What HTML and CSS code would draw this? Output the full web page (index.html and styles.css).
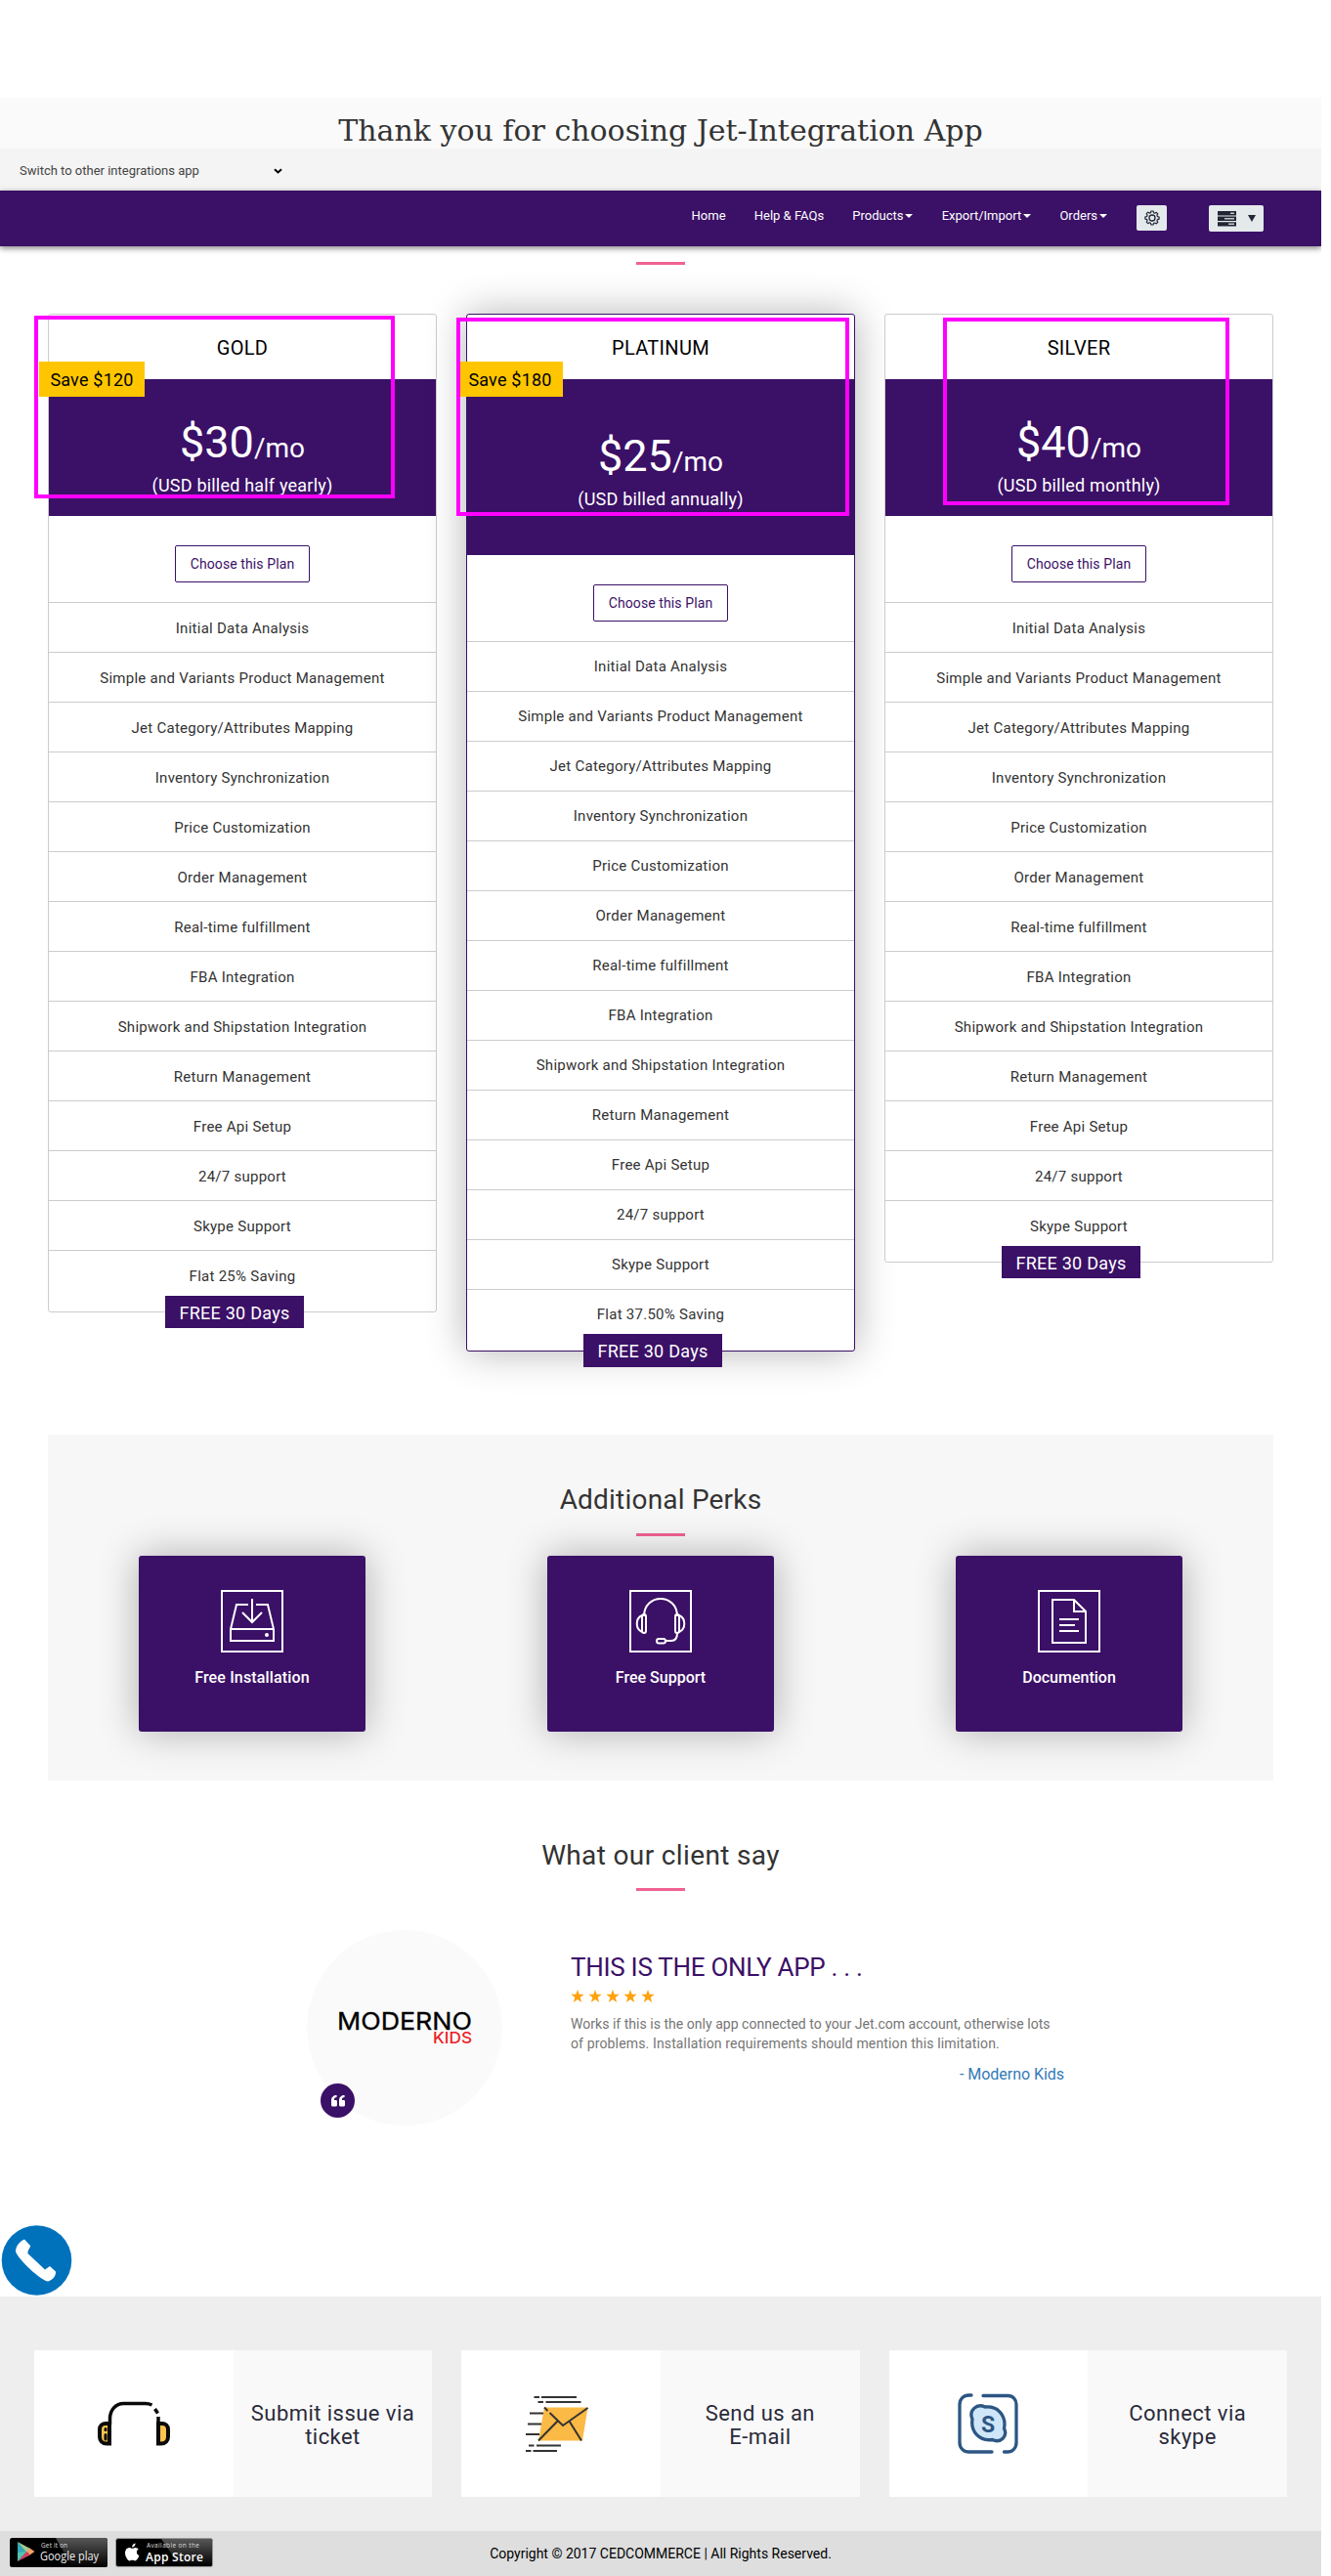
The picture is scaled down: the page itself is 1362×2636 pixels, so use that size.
FILE: index.html
```
<!DOCTYPE html>
<html lang="en">
<head>
<meta charset="utf-8">
<title>Jet-Integration App - Pricing</title>
<link rel="stylesheet" href="styles.css">
</head>
<body>
<header>
  <h1 class="thanks">Thank you for choosing Jet-Integration App</h1>
  <div class="switcher">
    <span class="switcher-label">Switch to other integrations app</span>
    <svg width="9" height="6" viewBox="0 0 9 6"><path d="M1 1.2 4.5 4.4 8 1.2" fill="none" stroke="#000" stroke-width="2"/></svg>
  </div>
  <nav class="nav">
    <a>Home</a>
    <a>Help &amp; FAQs</a>
    <a>Products<i class="caret"></i></a>
    <a>Export/Import<i class="caret"></i></a>
    <a>Orders<i class="caret"></i></a>
    <span class="nav-btn gear">
      <svg width="16" height="16" viewBox="0 0 16 16" fill="none" stroke="#222533"><path stroke-width="1.2" stroke-linejoin="round" d="M6.900 1h2.200l.4 1.700 1.300.5 1.500-.9 1.500 1.500-.9 1.500.5 1.300 1.700.4v2.200l-1.700.4-.5 1.300.9 1.500-1.500 1.500-1.500-.9-1.300.5L9.100 15H6.900l-.4-1.700-1.300-.5-1.500.9-1.500-1.500.9-1.500-.5-1.300L.9 9.100V6.900l1.700-.4.5-1.300-.9-1.500 1.500-1.500 1.500.9 1.300-.5z"/><circle cx="8" cy="8" r="3" stroke-width="1.300"/></svg>
    </span>
    <span class="nav-btn server">
      <svg width="19" height="16" viewBox="0 0 19 16"><path fill="#222533" d="M0 0h19v4.400H0zM0 5.600h19V10H0zM0 11.200h19v4.400H0z"/><path fill="#c4c8cc" d="M13 1.500h4v1.500h-4zM7 7h10v1.500H7zM11 12.600h6v1.500h-6z"/></svg>
      <svg width="8" height="7" viewBox="0 0 8 7"><path fill="#222533" d="M0 0h8L4 7z"/></svg>
    </span>
  </nav>
</header>

<main>
  <div class="rule rule-top"></div>
  <section class="plans">
    <article class="plan">
      <h2>GOLD</h2>
      <span class="save">Save $120</span>
      <div class="price"><p class="amount">$30<span>/mo</span></p><p class="billing">(USD billed half yearly)</p></div>
      <div class="choose"><a class="btn">Choose this Plan</a></div>
      <ul>
        <li>Initial Data Analysis</li><li>Simple and Variants Product Management</li><li>Jet Category/Attributes Mapping</li><li>Inventory Synchronization</li><li>Price Customization</li><li>Order Management</li><li>Real-time fulfillment</li><li>FBA Integration</li><li>Shipwork and Shipstation Integration</li><li>Return Management</li><li>Free Api Setup</li><li>24/7 support</li><li>Skype Support</li><li>Flat 25% Saving</li>
      </ul>
      <span class="free">FREE 30 Days</span>
    </article>
    <article class="plan featured">
      <h2>PLATINUM</h2>
      <span class="save">Save $180</span>
      <div class="price"><p class="amount">$25<span>/mo</span></p><p class="billing">(USD billed annually)</p></div>
      <div class="choose"><a class="btn">Choose this Plan</a></div>
      <ul>
        <li>Initial Data Analysis</li><li>Simple and Variants Product Management</li><li>Jet Category/Attributes Mapping</li><li>Inventory Synchronization</li><li>Price Customization</li><li>Order Management</li><li>Real-time fulfillment</li><li>FBA Integration</li><li>Shipwork and Shipstation Integration</li><li>Return Management</li><li>Free Api Setup</li><li>24/7 support</li><li>Skype Support</li><li>Flat 37.50% Saving</li>
      </ul>
      <span class="free">FREE 30 Days</span>
    </article>
    <article class="plan">
      <h2>SILVER</h2>
      <div class="price"><p class="amount">$40<span>/mo</span></p><p class="billing">(USD billed monthly)</p></div>
      <div class="choose"><a class="btn">Choose this Plan</a></div>
      <ul>
        <li>Initial Data Analysis</li><li>Simple and Variants Product Management</li><li>Jet Category/Attributes Mapping</li><li>Inventory Synchronization</li><li>Price Customization</li><li>Order Management</li><li>Real-time fulfillment</li><li>FBA Integration</li><li>Shipwork and Shipstation Integration</li><li>Return Management</li><li>Free Api Setup</li><li>24/7 support</li><li>Skype Support</li>
      </ul>
      <span class="free">FREE 30 Days</span>
    </article>
    <i class="mark mark-gold"></i>
    <i class="mark mark-platinum"></i>
    <i class="mark mark-silver"></i>
  </section>

  <section class="perks">
    <h2 class="section-title">Additional Perks</h2>
    <div class="rule"></div>
    <div class="perk-grid">
      <div class="perk">
        <svg width="64" height="64" viewBox="0 0 64 64" fill="none" stroke="#fff" stroke-width="2"><path d="M1 1h62v62H1z"/><path d="M28 15H16L10 40V52h44V40L48 15H36M10 40h44"/><path d="M32 9v24M22 23l10 10 10-10"/><circle cx="47" cy="46" r="2" fill="#fff" stroke="none"/></svg>
        <span>Free Installation</span>
      </div>
      <div class="perk">
        <svg width="64" height="64" viewBox="0 0 64 64" fill="none" stroke="#fff" stroke-width="2"><path d="M1 1h62v62H1z"/><path d="M15 27C15 3 49 3 49 27"/><rect x="13" y="25" width="4" height="19" rx="2"/><rect x="47" y="25" width="4" height="19" rx="2"/><path d="M13 26c-7 3-7 14 0 17M51 26c7 3 7 14 0 17M49 44c0 6-2 8-6 8h-6"/><rect x="28" y="50" width="9" height="4.500" rx="2.200"/></svg>
        <span class="tight">Free Support</span>
      </div>
      <div class="perk">
        <svg width="64" height="64" viewBox="0 0 64 64" fill="none" stroke="#fff" stroke-width="2"><path d="M1 1h62v62H1z"/><path d="M15 10h22l12 12v32H15zM37 10v12h12M22 30h20M22 36h16M22 42h20"/></svg>
        <span class="tight">Documention</span>
      </div>
    </div>
  </section>

  <section class="clients">
    <h2 class="section-title wide">What our client say</h2>
    <div class="rule"></div>
    <div class="testimonial">
      <div class="avatar">
        <svg class="logo" width="140" height="50" viewBox="0 -8 140 50"><text class="logo-main" x="1" y="20" textLength="138" lengthAdjust="spacingAndGlyphs">MODERNO</text><text class="logo-sub" x="99" y="34" textLength="40" lengthAdjust="spacingAndGlyphs">KIDS</text></svg>
        <span class="quote"><svg width="14" height="12" viewBox="0 0 14 12" fill="#fff"><path d="M5.600 0v2C4 2 2.900 3 2.900 4.600V5h1.800C5.500 5 6 5.600 6 6.400v3.700c0 .9-.5 1.500-1.400 1.500H1.500C.6 11.600 0 11 0 10.100V5.200C0 2 2.300 0 5.600 0z"/><path d="M13.600 0v2c-1.600 0-2.700 1-2.700 2.600V5h1.800c.8 0 1.300.6 1.300 1.400v3.700c0 .9-.5 1.500-1.400 1.500H9.500C8.600 11.600 8 11 8 10.100V5.200C8 2 10.300 0 13.600 0z"/></svg></span>
      </div>
      <div class="review">
        <h3>THIS IS THE ONLY APP . . .</h3>
        <svg class="stars" width="88" height="13" viewBox="0 0 88 13" fill="#ffa20d"><path d="M7 0l1.700 4.800h5l-4 3.100L11.200 13 7 9.900 2.800 13l1.500-5.100-4-3.100h5z"/><path d="M25 0l1.700 4.800h5l-4 3.100 1.500 5.100L25 9.900 20.800 13l1.500-5.100-4-3.100h5z"/><path d="M43 0l1.700 4.800h5l-4 3.100 1.500 5.100L43 9.900 38.800 13l1.500-5.100-4-3.100h5z"/><path d="M61 0l1.700 4.800h5l-4 3.100 1.500 5.100L61 9.900 56.800 13l1.500-5.100-4-3.100h5z"/><path d="M79 0l1.700 4.800h5l-4 3.100 1.500 5.100L79 9.900 74.800 13l1.500-5.100-4-3.100h5z"/></svg>
        <p>Works if this is the only app connected to your Jet.com account, otherwise lots<br><span class="line-two">of problems. Installation requirements should mention this limitation.</span></p>
        <a class="author">- Moderno Kids</a>
      </div>
    </div>
  </section>
</main>

<div class="phone">
  <svg width="74" height="74" viewBox="0 0 74 74"><circle cx="37.500" cy="37" r="35.800" fill="#0072bc"/><path fill="#fff" d="M25 15.500l6 6.500c.5 2-3 4-2.500 8L46 46.500l5-3.500 6 5.500c.5 3-2 8-7.500 10C42 58 19 36.500 16 28c0-5 3.500-10 9-12.500z"/></svg>
</div>

<footer>
  <div class="contact">
    <div class="contact-card">
      <div class="pic"><svg width="74" height="46" viewBox="0 0 74 46" fill="none" stroke="#0a0a0a" stroke-width="4"><path fill="#fdc44f" d="M12 43.500H9c-4 0-7-3-7-7V29c0-4 3-6 6-6h4z"/><path fill="#fdc44f" d="M62 43.500h3c4 0 7-3 7-7V29c0-4-3-6-6-6h-4z"/><path stroke-width="3.500" d="M12.500 24V18c0-9 6-15.500 14-15.500h22c2.500 0 5 .5 7 1.500M58.500 8l3 4.500M62 16v8"/><path stroke-width="3" stroke-linecap="round" d="M8 28.500v1M8 34.500V39"/></svg></div>
      <div class="txt">Submit issue via<br>ticket</div>
    </div>
    <div class="contact-card">
      <div class="pic mail"><svg width="65" height="59" viewBox="0 0 65 59" fill="none" stroke="#333" stroke-width="2"><path fill="#fbb945" stroke="none" d="M19 12.500h44.500L58 46.500H13z"/><path d="M8.500 2h5.500M16 2h36M12.500 7H18M20.500 7h36M4 18.500h14M2 29.500h14M0 40h14M3 51.500h5.500M11 51.500h25M0 57h5.500M7.500 57H32"/><path d="M19 12.500l3.500 3.500M24.500 18L38 31 63.500 13M33 26 13 46.500M44.500 26.500 57 46.500"/></svg></div>
      <div class="txt">Send us an<br>E-mail</div>
    </div>
    <div class="contact-card">
      <div class="pic"><svg width="62" height="62" viewBox="0 0 62 62" fill="none" stroke="#2d5683" stroke-width="3.300" stroke-linecap="round"><path d="M14 2h-2.500C6 2 2 6 2 11.500v39C2 56 6 60 11.500 60H35M26 2.500h25.500c5 0 8.500 4 8.500 9v39c0 5.500-4 9.500-9 9.500h-3.500"/><path fill="#cfe6f9" d="M28 14c13-1.500 22 9 19.500 22 4 8-3.500 15.500-12 11.500C22 49.500 13 39 15 26.500 11 17.500 19.500 10 28 14z"/><text class="skype-s" x="31" y="39.500" text-anchor="middle">S</text></svg></div>
      <div class="txt">Connect via<br>skype</div>
    </div>
  </div>
  <div class="bottom">
    <div class="stores">
      <svg width="100" height="30" viewBox="0 0 100 30"><defs><linearGradient id="shine" x1="0" y1="0" x2="0" y2="1"><stop offset="0" stop-color="#585858"/><stop offset="1" stop-color="#000"/></linearGradient></defs><rect width="100" height="30" rx="2.500"/><path fill="url(#shine)" d="M47 0h50.500a2.500 2.500 0 0 1 2.500 2.500v25a2.500 2.500 0 0 1-2.500 2.500H64z"/><path fill="#2fa8b8" d="M8 4l10 10L8 24z"/><path fill="#a5c98a" d="M8 4l13 7-4 3.500z"/><path fill="#f4a06a" d="M20.500 10.500L25.500 14l-5 3.500-3.500-3.500z"/><path fill="#d5415f" d="M8 24l9-10 4 3.500z"/><path fill="#52c3b0" d="M8 15l9-1-9 10z"/><text class="store-top" x="32" y="9.500" textLength="27">Get it on</text><text class="play-name" x="31" y="23" textLength="60" lengthAdjust="spacingAndGlyphs">Google play</text></svg>
      <svg width="100" height="30" viewBox="0 0 100 30"><rect x=".5" y=".5" width="99" height="29" rx="2.500" stroke="#999"/><path fill="url(#shine)" d="M47 1h50.500a2 2 0 0 1 1.500 2v24.500a2 2 0 0 1-1.500 1.500H66z"/><path fill="#fff" d="M20.500 5.500c.3 2-1.200 4-3.300 4-.2-2 1.300-3.700 3.300-4zM17.500 10.800c1 0 1.800-.9 3.200-.8 1.300.1 2.300.6 3 1.600-2.700 1.700-2.200 5.400.7 6.500-.8 2.500-2.400 5.300-4.200 5.300-1 0-1.600-.7-2.800-.7s-1.700.7-2.700.7c-2 0-5-5-4.700-8.500.2-3 2-4.800 4.200-4.900 1.300 0 2.300.8 3.300.8z"/><text class="store-top" x="32" y="9.500" textLength="54">Available on the</text><text class="apple-name" x="31" y="23.500" textLength="59">App Store</text></svg>
    </div>
    <span>Copyright © 2017 CEDCOMMERCE | All Rights Reserved.</span>
  </div>
</footer>
</body>
</html>
```
FILE: styles.css
```
* { box-sizing: border-box; }
body { margin: 0; width: 1352px; background: #fff; color: #333; font: 14px/20px Roboto, sans-serif; position: relative; padding-top: 100px; }
h1, h2, h3, p, ul { margin: 0; padding: 0; font-weight: 400; }
ul { list-style: none; }
svg { display: block; }

.thanks { height: 52px; padding-top: 16px; background: #fafafa; font: 400 30px/36px "DejaVu Serif", serif; text-align: center; color: #333; }
.switcher { display: flex; align-items: center; height: 43px; padding: 2px 0 0 20px; background: #f4f4f4; font-size: 13px; color: #444; }
.switcher-label { width: 260px; }
.nav { display: flex; justify-content: flex-end; gap: 30px; height: 57px; padding-right: 59px; background: #3b1067; color: #fff; font-size: 13px; line-height: 51px; box-shadow: 0 2px 6px rgba(0, 0, 0, .5); position: relative; }
.caret { display: inline-block; margin-left: 2px; border: 4px solid transparent; border-top-color: #fff; border-bottom: 0; vertical-align: 2px; }
.nav a:nth-child(n+2) { margin-left: -.8px; }
.nav-btn { display: flex; align-items: center; justify-content: center; margin-top: 15px; background: #e4e9ec; border-radius: 2px; }
.gear { width: 31px; height: 26px; }
.server { width: 56px; height: 27px; gap: 12px; margin-left: 13px; }

.rule { width: 50px; height: 3px; margin: 0 auto; background: #f06292; }
.rule-top { margin-top: 16px; }

.plans { position: relative; display: grid; grid-template-columns: repeat(3, 398px); gap: 30px; align-items: start; margin: 50px 49px 0; }
.plan { position: relative; border: 1px solid #ccc; border-radius: 3px; padding-bottom: 12px; background: #fff; text-align: center; }
.plan h2 { height: 66px; padding-top: 1px; font-size: 20px; line-height: 66px; letter-spacing: .3px; color: #000; }
.price { height: 140px; padding-top: 40px; background: #3b1067; color: #fff; }
.amount { font-size: 45px; line-height: 50px; height: 50px; }
.amount span { font-size: 28px; line-height: 1; }
.billing { font-size: 18px; line-height: 38px; letter-spacing: .2px; }
.choose { height: 88px; padding-top: 30px; }
.btn { display: block; width: 138px; height: 38px; margin: 0 auto; border: 1px solid #3b1067; border-radius: 2px; line-height: 36px; letter-spacing: .1px; color: #3b1067; }
.plan li { height: 51px; padding-top: 1px; border-top: 1px solid #ccc; font-size: 15px; line-height: 50px; letter-spacing: .26px; color: #333; }
.save { position: absolute; left: -10px; top: 48px; width: 108px; height: 36px; background: #ffc600; color: #000; font-size: 18px; line-height: 37px; letter-spacing: .2px; }
.free { position: absolute; left: 119px; bottom: -17px; width: 142px; height: 33px; background: #3b1067; color: #fff; font-size: 18px; line-height: 36px; letter-spacing: .25px; }
.featured { border-color: #3b1067; box-shadow: 0 0 40px rgba(0, 0, 0, .3); }
.featured .price { height: 180px; padding-top: 54px; }
.featured li { padding-top: 0; }
.featured .free { height: 34px; }
.mark { position: absolute; border: 4px solid #f0f; }
.mark-gold { left: -14px; top: 2px; width: 369px; height: 187px; }
.mark-platinum { left: 418px; top: 4px; width: 402px; height: 203px; }
.mark-silver { left: 916px; top: 4px; width: 293px; height: 192px; }

.section-title { position: relative; padding-top: 1px; font-size: 28px; line-height: 40px; letter-spacing: .2px; text-align: center; color: #333; }
.section-title.wide { letter-spacing: .36px; }
.perks { height: 354px; margin: 85px 49px 0; padding-top: 46px; background: #f7f7f7; }
.perks .rule { margin-top: 14px; }
.perk-grid { display: grid; grid-template-columns: repeat(3, 1fr); margin-top: 20px; justify-items: center; }
.perk { width: 232.600px; height: 180px; padding-top: 35px; background: #3b1067; border-radius: 3px; box-shadow: 0 0 40px rgba(0, 0, 0, .3); color: #fff; font-size: 16px; font-weight: 500; line-height: 22px; letter-spacing: .15px; text-align: center; }
.perk svg { margin: 0 auto 15px; }
.perk .tight { letter-spacing: 0; }

.clients { padding-top: 56px; }
.clients .rule { margin-top: 13px; }
.testimonial { display: flex; gap: 70px; margin: 40px 0 0 314px; height: 200px; }
.avatar { position: relative; display: flex; justify-content: center; width: 200px; height: 200px; padding-top: 74px; border-radius: 50%; background: #fafafa; }
.logo-main { font: 400 24.500px Inter, sans-serif; fill: #000; stroke: #000; stroke-width: .3px; }
.logo-sub { font: 500 16px Inter, sans-serif; fill: #ed1c24; }
.quote { position: absolute; left: 14px; top: 157px; display: flex; align-items: center; justify-content: center; width: 35px; height: 35px; border-radius: 50%; background: #3b1067; }
.review { width: 505px; padding-top: 20px; display: flex; flex-direction: column; }
.review h3 { font-size: 26px; line-height: 36px; letter-spacing: -.28px; color: #3b1067; }
.stars { margin: 5px 0 12px; }
.review p { color: #757575; letter-spacing: .03px; }
.line-two { letter-spacing: .14px; }
.author { align-self: flex-end; margin-top: 10px; font-size: 16px; line-height: 24px; letter-spacing: -.04px; color: #337ab7; }

.phone { position: absolute; left: 0; top: 2276px; }

.contact { display: grid; grid-template-columns: repeat(3, 1fr); gap: 30px; height: 240px; margin-top: 175px; padding: 55px 35px 35px; background: #eee; }
.contact-card { display: grid; grid-template-columns: 1fr 1fr; background: #fff; }
.pic { display: flex; align-items: center; justify-content: center; }
.mail { padding-right: 7px; }
.txt { padding-top: 53px; background: #f9f9f9; text-align: center; font-size: 22px; line-height: 24px; letter-spacing: .45px; color: #2a2a3a; }
.skype-s { font: 700 23px Roboto, sans-serif; fill: #2d5683; stroke: none; }
.bottom { display: grid; grid-template-columns: 1fr auto 1fr; height: 46px; background: #dedede; line-height: 46px; color: #000; }
.stores { display: flex; gap: 8px; padding: 7px 0 0 10px; }
.store-top { font: 400 6.500px "Open Sans", sans-serif; fill: #ddd; }
.play-name { font: 400 12.500px "Open Sans", sans-serif; fill: #eee; }
.apple-name { font: 600 12px "Open Sans", sans-serif; fill: #fff; }
```
